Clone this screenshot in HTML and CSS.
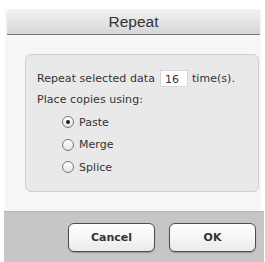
FILE: index.html
```html
<!DOCTYPE html>
<html>
<head>
<meta charset="utf-8">
<link rel="stylesheet" href="styles.css">
</head>
<body>
<div class="window">
  <div class="titlebar">Repeat</div>
  <div class="content">
    <div class="group">
      <div class="row first">
        <span>Repeat selected data</span>
        <span class="field">16</span>
        <span>time(s).</span>
      </div>
      <div class="row">Place copies using:</div>
      <div class="radios">
        <div class="radio"><span class="dot checked"></span>Paste</div>
        <div class="radio"><span class="dot"></span>Merge</div>
        <div class="radio"><span class="dot"></span>Splice</div>
      </div>
    </div>
  </div>
  <div class="footer">
    <div class="btn">Cancel</div>
    <div class="btn">OK</div>
  </div>
</div>
</body>
</html>
```

FILE: styles.css
```css
html, body {
  margin: 0;
  padding: 0;
  background: #ffffff;
}
body {
  padding: 9px 0 0 5px;
  font-family: "DejaVu Sans", Verdana, sans-serif;
  color: #2a2a2a;
}
.window {
  width: 256px;
  height: 253px;
  display: flex;
  flex-direction: column;
  background: #f6f6f6;
}
.titlebar {
  margin: 0 1px 0 2px;
  height: 25px;
  border-radius: 5px 5px 0 0;
  background: linear-gradient(#f2f2f2, #d6d6d6);
  border-bottom: 1px solid #7a7a7a;
  text-align: center;
  font-family: "Liberation Sans", Arial, sans-serif;
  font-size: 15.5px;
  line-height: 26px;
  color: #333;
}
.content {
  flex: 1;
  padding: 19px 10px 19px 20px;
}
.group {
  width: 221px;
  height: 136px;
  border: 1px solid #cfcfcf;
  border-radius: 6px;
  background: #e9e9e9;
  padding: 0 0 0 11px;
  box-sizing: content-box;
  font-size: 11px;
  letter-spacing: 0.05px;
  color: #333;
}
.row {
  display: flex;
  align-items: center;
  height: 21px;
}
.row.first {
  margin-top: 13px;
}
.field {
  display: inline-block;
  width: 28px;
  height: 17px;
  line-height: 17px;
  background: #fff;
  border: 1px solid #d8d8d8;
  margin: 0 4px 0 5px;
  box-sizing: border-box;
  padding-left: 4px;
}
.radios {
  padding-left: 25px;
  margin-top: 1px;
}
.radio {
  display: flex;
  align-items: center;
  height: 22.5px;
}
.dot {
  width: 12px;
  height: 12px;
  border-radius: 50%;
  border: 1px solid #777;
  background: linear-gradient(#ffffff, #e6e6e6);
  box-sizing: border-box;
  margin-right: 5px;
  display: flex;
  align-items: center;
  justify-content: center;
}
.dot.checked::after {
  content: "";
  width: 4px;
  height: 4px;
  border-radius: 50%;
  background: #222;
}
.footer {
  height: 41px;
  margin-left: -1px;
  margin-right: -3px;
  background: #c6c6c6;
  border-top: 1px solid #b5b5b5;
  display: flex;
  padding: 11px 0 0 64px;
  gap: 14px;
}
.btn {
  width: 87px;
  height: 29px;
  box-sizing: border-box;
  border: 1px solid #4d4d4d;
  border-radius: 6px;
  background: linear-gradient(#ffffff, #ebebeb);
  box-shadow: 0 1px 1px rgba(0,0,0,0.25);
  font-weight: bold;
  font-size: 11px;
  display: flex;
  align-items: center;
  justify-content: center;
  color: #333;
}
```
